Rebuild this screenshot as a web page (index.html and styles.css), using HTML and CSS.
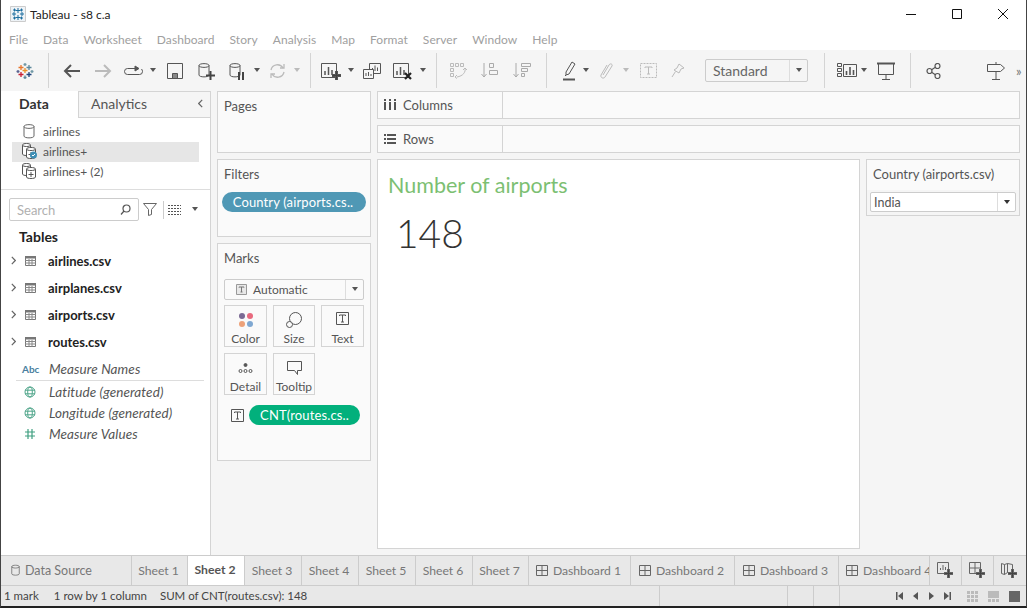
FILE: index.html
```html
<!DOCTYPE html>
<html lang="en">
<head>
    <meta charset="UTF-8">
    <meta name="viewport" content="width=device-width, initial-scale=1.0">
    <title>Tableau - s8 c.a</title>
    <link rel="stylesheet" href="styles.css">
</head>
<body>

    <!-- shared icons -->
    <svg class="defs">
        <symbol id="caret" viewBox="0 0 8 5"><path d="M1 0h6L4 4z" fill="currentColor"/></symbol>
        <symbol id="cyl" viewBox="0 0 12 16"><path d="M1 3.500C1 1 11 1 11 3.500V13C11 15.500 1 15.500 1 13ZM1 3.500C1 6 11 6 11 3.500" fill="none" stroke="currentColor"/></symbol>
        <symbol id="blend" viewBox="0 0 16 18"><g fill="#fff" stroke="#555"><path d="M1.500 3C1.500 1 9.500 1 9.500 3V12C9.500 14 1.500 14 1.500 12Z"/><path d="M1.500 3C1.500 5 9.500 5 9.500 3"/><path d="M5.500 7C5.500 5 14.500 5 14.500 7V15C14.500 17 5.500 17 5.500 15Z"/><path d="M5.500 7C5.500 9 14.500 9 14.500 7"/><path d="M10 10v5M7.500 12.500h5" fill="none"/></g></symbol>
        <symbol id="table" viewBox="0 0 11 10"><path d="M.5.500h10v9H.5z" fill="#fff" stroke="#777"/><path d="M0 0h11v2.500H0z" fill="#777"/><path d="M4 3v7M7 3v7M0 4.500h11M0 7h11" stroke="#888"/></symbol>
        <symbol id="globe" viewBox="0 0 12 12"><g fill="none" stroke="#4fa58a"><circle cx="6" cy="6" r="5"/><ellipse cx="6" cy="6" rx="2.300" ry="5"/><path d="M1 4.200h10M1 7.800h10"/></g></symbol>
        <symbol id="plus" viewBox="0 0 9 9"><path d="M3.500 0h2v3.500H9v2H5.500V9h-2V5.500H0v-2h3.500z" fill="#444"/></symbol>
        <symbol id="dash" viewBox="0 0 12 11"><path d="M.5.500h11v10H.5zM6 .500v10M.5 5.500h11" fill="none" stroke="#666"/></symbol>
        <symbol id="tbox" viewBox="0 0 13 13"><path d="M.5.500h12v12H.5z" fill="none" stroke="#555"/><path d="M3.500 4V3h6v1M6.500 3v7M5 10h3" fill="none" stroke="#555"/></symbol>
        <symbol id="chev" viewBox="0 0 5 9"><path d="M.8.800l3.500 3.700L.8 8.200" fill="none" stroke="#666" stroke-width="1.200"/></symbol>
    </svg>

    <div class="app">
        <div class="titlebar">
            <svg class="app-icon" viewBox="0 0 16 16"><path d="M.5.500h15v15H.5z" fill="#eef3f7" stroke="#ccc"/><path d="M8 2v5M5.500 4.500h5M8 9v5M5.500 11.500h5M4 6v4M2 8h4M12 6v4M10 8h4M4.500 2.500v3M3 4h3M11.500 2.500v3M10 4h3M4.500 10.500v3M3 12h3M11.500 10.500v3M10 12h3" stroke="#1f6f9f" fill="none"/></svg>
            <span class="title">Tableau - s8 c.a</span>
            <div class="win-btns">
                <svg viewBox="0 0 46 14"><path d="M18 7.500h10" stroke="#111" fill="none"/></svg>
                <svg viewBox="0 0 46 14"><path d="M18.500 2.500h9v9h-9z" stroke="#111" fill="none"/></svg>
                <svg viewBox="0 0 46 14"><path d="M18 2l10 10M28 2L18 12" stroke="#111" fill="none"/></svg>
            </div>
        </div>

        <div class="menubar">
            <span>File</span><span>Data</span><span>Worksheet</span><span>Dashboard</span><span>Story</span><span>Analysis</span><span>Map</span><span>Format</span><span>Server</span><span>Window</span><span>Help</span>
        </div>

        <div class="toolbar">
            <div class="tool logo">
                <svg width="18" height="18" viewBox="0 0 18 18" fill="none" stroke-width="1.300"><path d="M9 1v3M7.500 2.500h3" stroke="#7099a6"/><path d="M5 3v5M2.500 5.500h5" stroke="#e8762c"/><path d="M13 3v5M10.500 5.500h5" stroke="#5b879b"/><path d="M2 8v3M.5 9.500h3" stroke="#5b6591"/><path d="M16 8v3M14.500 9.500h3" stroke="#7099a6"/><path d="M9 6v5M6.500 8.500h5" stroke="#eb912b"/><path d="M5 10v5M2.500 12.500h5" stroke="#c72035"/><path d="M13 10v5M10.500 12.500h5" stroke="#1f447e"/><path d="M9 13.500v3.500M7.500 15.500h3" stroke="#59879b"/></svg>
            </div>
            <div class="sep sep-logo"></div>
            <div class="tool gap2"><svg width="17" height="14" viewBox="0 0 17 14" fill="none" stroke="#555" stroke-width="2"><path d="M17 7H2M8 1L2 7l6 6"/></svg></div>
            <div class="tool"><svg width="17" height="14" viewBox="0 0 17 14" fill="none" stroke="#bbb" stroke-width="2"><path d="M0 7h15M9 1l6 6-6 6"/></svg></div>
            <div class="tool"><svg width="19" height="12" viewBox="0 0 19 12" fill="none" stroke="#555"><path d="M11 3.500H3.500a3 3 0 0 0 0 6h12a3 3 0 0 0 3-3c0-1-.5-2-1-2.500"/><path d="M11 1v5l4-2.500z" fill="#555"/></svg></div>
            <svg class="caret gap2"><use href="#caret"/></svg>
            <div class="tool gap1"><svg width="16" height="16" viewBox="0 0 16 16" fill="none" stroke="#555"><path d="M.5.500h15v15H.5z"/><path d="M5.500 10.500h5v5h-5z" fill="#888"/></svg></div>
            <div class="tool gap1"><svg width="17" height="18" viewBox="0 0 17 18"><use href="#cyl" width="12" height="16" color="#555"/><use href="#plus" x="8" y="9" width="9" height="9"/></svg></div>
            <div class="tool"><svg width="17" height="18" viewBox="0 0 17 18"><use href="#cyl" width="12" height="16" color="#555"/><path d="M9 10h2v8H9zM13 10h2v8h-2z" fill="#444"/></svg></div>
            <svg class="caret"><use href="#caret"/></svg>
            <div class="tool"><svg width="17" height="16" viewBox="0 0 17 16" fill="none" stroke="#bbb" stroke-width="1.300"><path d="M2 7a6.500 6.500 0 0 1 12-2M15 9a6.500 6.500 0 0 1-12 2"/><path d="M11 5h4V1M6 11H2v4"/></svg></div>
            <svg class="caret off"><use href="#caret"/></svg>
            <div class="sep"></div>
            <div class="tool"><svg width="20" height="18" viewBox="0 0 20 18" fill="none" stroke="#555"><path d="M.5 1.500h15v14H.5z"/><path d="M4 13V9M7.500 13V5M11 13V8" stroke-width="1.500"/><use href="#plus" x="11" y="9" width="9" height="9"/></svg></div>
            <svg class="caret gap1"><use href="#caret"/></svg>
            <div class="tool gap1"><svg width="18" height="16" viewBox="0 0 18 16" fill="none" stroke="#555"><path d="M6.500.500h11v10h-11z"/><path d="M9.500 8V5M12 8V2.500M14.500 8V4.500"/><path d="M.5 6.500h10v9H.5z" fill="#f5f5f5"/><path d="M3 13v-3M5.500 13V9M8 13v-2"/></svg></div>
            <div class="tool"><svg width="20" height="18" viewBox="0 0 20 18" fill="none" stroke="#555"><path d="M.5 1.500h15v14H.5z"/><path d="M4 13V9M7.500 13V5M11 13V8" stroke-width="1.500"/><path d="M12 11l6 6M18 11l-6 6" stroke="#222" stroke-width="2.200"/></svg></div>
            <svg class="caret"><use href="#caret"/></svg>
            <div class="sep sep-sort"></div>
            <div class="tool gap2"><svg width="17" height="16" viewBox="0 0 17 16" fill="none" stroke="#bbb"><path d="M.5.500h3v3h-3zM5.500.500h3v3h-3zM10.500.500h3v3h-3zM.5 5.500h3v3h-3zM.5 10.500h3v3h-3z"/><path d="M15 5c1 4-2 8-8 9M13 7l2-2 2 2M7 12l-2 2 2 1.500"/></svg></div>
            <div class="tool gap2"><svg width="18" height="16" viewBox="0 0 18 16" fill="none" stroke="#aaa"><path d="M3 0v14M.5 11L3 14l2.500-3"/><path d="M8.500.500h4v4h-4zM8.500 7.500h8v4h-8z"/></svg></div>
            <div class="tool"><svg width="18" height="16" viewBox="0 0 18 16" fill="none" stroke="#aaa"><path d="M3 0v14M.5 11L3 14l2.500-3"/><path d="M8.500.500h9v3h-9zM8.500 5.500h6v3h-6zM8.500 10.500h3v3h-3z"/></svg></div>
            <div class="sep sep-mark"></div>
            <div class="tool narrow"><svg width="13" height="20" viewBox="0 0 13 20" fill="none" stroke="#555"><path d="M9 1l3 2-6 10-3 1 0-3zM2 15l1-1"/><path d="M0 18.500h12" stroke-width="2"/></svg></div>
            <svg class="caret"><use href="#caret"/></svg>
            <div class="tool"><svg width="13" height="18" viewBox="0 0 13 18" fill="none" stroke="#bbb"><path d="M3 13L9 3c1-2 4-1 3 1L5 15c-1 2-5 1-4-2l6-10"/></svg></div>
            <svg class="caret off gap2"><use href="#caret"/></svg>
            <div class="tool"><svg width="17" height="15" viewBox="0 0 17 15" fill="none" stroke="#bbb"><path d="M.5.500h16v14H.5z" stroke-dasharray="2 1"/><path d="M5 5V4h7v1M8.500 4v7M7 11h3"/></svg></div>
            <div class="tool"><svg width="14" height="16" viewBox="0 0 14 16" fill="none" stroke="#bbb"><path d="M8 1l5 4-3 1-2 4-5-3 3-2zM4.500 8.500L1 14"/></svg></div>
            <div class="fit-select">
                <span class="fit-label">Standard</span>
                <span class="fit-arrow"><svg width="8" height="5"><use href="#caret"/></svg></span>
            </div>
            <div class="sep sep-fit"></div>
            <div class="tool narrow"><svg width="20" height="15" viewBox="0 0 20 15" fill="none" stroke="#555"><path d="M.5.500h4v3h-4zM.5 5.500h4v3h-4zM.5 10.500h4v3h-4zM6.500 1.500h13v12h-13z"/><path d="M9.500 12V8M13 12V4M16.500 12V7" stroke-width="1.600"/></svg></div>
            <svg class="caret gap2"><use href="#caret"/></svg>
            <div class="tool"><svg width="18" height="18" viewBox="0 0 18 18" fill="none" stroke="#555"><path d="M0 1.500h18" stroke-width="2"/><path d="M1.500 2v10.500h15V2M9 12.500V17M5 17.500h8"/></svg></div>
            <div class="sep sep-share"></div>
            <div class="tool"><svg width="15" height="16" viewBox="0 0 15 16" fill="none" stroke="#555" stroke-width="1.200"><circle cx="3.500" cy="8" r="2.500"/><circle cx="11.500" cy="3" r="2.500"/><circle cx="11.500" cy="13" r="2.500"/><path d="M5.600 6.700l3.800-2.400M5.600 9.300l3.800 2.400"/></svg></div>
            <div class="tool guide"><svg width="18" height="18" viewBox="0 0 18 18" fill="none" stroke="#555"><path d="M.5 2.500h13l4 3.500-4 3.500H.5zM9 0v2.500M9 9.500V17M5 17.500h8"/></svg></div>
            <span class="more">»</span>
        </div>

        <div class="main">
            <div class="data-pane">
                <div class="pane-tabs">
                    <div class="pane-tab active">Data</div>
                    <div class="pane-tab">Analytics<svg class="collapse" width="5" height="9"><use href="#chev" transform="matrix(-1 0 0 1 5 0)"/></svg></div>
                </div>
                <div class="sources">
                    <div class="source"><svg width="12" height="16"><use href="#cyl" color="#666"/></svg><span>airlines</span></div>
                    <div class="source selected"><svg class="blend-icon" width="18" height="18" viewBox="0 0 18 18"><use href="#blend" width="16" height="18"/><circle cx="12.500" cy="13" r="3.500" fill="#3f8fb5"/><path d="M11 13l1 1 2-2" stroke="#fff" fill="none"/></svg><span>airlines+</span></div>
                    <div class="source"><svg class="blend-icon" width="18" height="18" viewBox="0 0 18 18"><use href="#blend" width="16" height="18"/></svg><span>airlines+ (2)</span></div>
                </div>
                <div class="search-row">
                    <div class="search">
                        <span>Search</span>
                        <svg width="11" height="11" viewBox="0 0 11 11" fill="none" stroke="#555" stroke-width="1.200"><circle cx="6.500" cy="4.500" r="3.500"/><path d="M4 7l-3 3.500"/></svg>
                    </div>
                    <svg width="14" height="13" viewBox="0 0 14 13" fill="none" stroke="#666"><path d="M.5.500h13L8.500 6.500v5l-3 1v-6z"/></svg>
                    <div class="mini-sep"></div>
                    <svg width="13" height="10" viewBox="0 0 13 10" stroke="#555" fill="none" stroke-dasharray="2 1"><path d="M0 .5h13M0 3.500h13M0 6.500h13M0 9.500h13"/></svg>
                    <svg class="caret-sm" width="8" height="5"><use href="#caret"/></svg>
                </div>
                <div class="tables-head">Tables</div>
                <div class="table-row"><svg width="5" height="9"><use href="#chev"/></svg><svg width="11" height="10"><use href="#table"/></svg><span>airlines.csv</span></div>
                <div class="table-row"><svg width="5" height="9"><use href="#chev"/></svg><svg width="11" height="10"><use href="#table"/></svg><span>airplanes.csv</span></div>
                <div class="table-row"><svg width="5" height="9"><use href="#chev"/></svg><svg width="11" height="10"><use href="#table"/></svg><span>airports.csv</span></div>
                <div class="table-row"><svg width="5" height="9"><use href="#chev"/></svg><svg width="11" height="10"><use href="#table"/></svg><span>routes.csv</span></div>
                <div class="field names"><span class="abc">Abc</span><span class="fname">Measure Names</span></div>
                <div class="field"><svg width="12" height="12"><use href="#globe"/></svg><span class="fname">Latitude (generated)</span></div>
                <div class="field"><svg width="12" height="12"><use href="#globe"/></svg><span class="fname">Longitude (generated)</span></div>
                <div class="field"><svg width="12" height="12" viewBox="0 0 12 12" fill="none" stroke="#3f9f80" stroke-width="1.200"><path d="M4 1v10M8 1v10M1 4h10M1 8h10"/></svg><span class="fname">Measure Values</span></div>
            </div>

            <div class="cards-col">
                <div class="card pages">Pages</div>
                <div class="card filters">
                    <div>Filters</div>
                    <div class="pill blue">Country (airports.cs..</div>
                </div>
                <div class="card marks">
                    <div>Marks</div>
                    <div class="mark-select">
                        <span class="mark-type"><svg width="11" height="11" viewBox="0 0 11 11" fill="#e8e8e8" stroke="#999"><path d="M.5.500h10v10H.5z"/><path d="M3 3.500V3h5v.5M5.500 3v5M4.500 8h2" fill="none" stroke="#777"/></svg>Automatic</span>
                        <span class="mark-arrow"><svg width="8" height="5"><use href="#caret"/></svg></span>
                    </div>
                    <div class="mark-grid">
                        <div class="mark-btn"><svg width="16" height="16" viewBox="0 0 16 16"><circle cx="4" cy="4" r="3" fill="#7b6a94"/><circle cx="12" cy="4" r="3" fill="#e86a7e"/><circle cx="4" cy="12" r="3" fill="#eda27a"/><circle cx="12" cy="12" r="3" fill="#7fa8d2"/></svg>Color</div>
                        <div class="mark-btn"><svg width="16" height="16" viewBox="0 0 16 16" fill="none" stroke="#555"><circle cx="9.500" cy="6.500" r="6"/><circle cx="3.500" cy="12.500" r="3" fill="#fafafa"/></svg>Size</div>
                        <div class="mark-btn"><svg width="13" height="13"><use href="#tbox"/></svg>Text</div>
                        <div class="mark-btn"><svg width="15" height="16" viewBox="0 0 15 16" fill="none" stroke="#555"><circle cx="7.500" cy="5" r="1.500" fill="#555"/><circle cx="2.500" cy="11" r="1.500"/><circle cx="7.500" cy="11" r="1.500"/><circle cx="12.500" cy="11" r="1.500"/></svg>Detail</div>
                        <div class="mark-btn"><svg width="15" height="16" viewBox="0 0 15 16" fill="none" stroke="#555"><path d="M.5 1.500h14v9h-4v4l-3-4h-7z"/></svg>Tooltip</div>
                    </div>
                    <div class="mark-pill">
                        <svg width="13" height="13"><use href="#tbox"/></svg>
                        <div class="pill green">CNT(routes.cs..</div>
                    </div>
                </div>
            </div>

            <div class="work">
                <div class="shelf"><div class="shelf-label"><svg width="12" height="11" viewBox="0 0 12 11" fill="#555"><path d="M0 0h2v2H0zM5 0h2v2H5zM10 0h2v2h-2zM0 3h2v8H0zM5 3h2v8H5zM10 3h2v8h-2z"/></svg>Columns</div></div>
                <div class="shelf"><div class="shelf-label"><svg width="12" height="10" viewBox="0 0 12 10" fill="#555"><path d="M0 0h2v2H0zM3 0h9v2H3zM0 4h2v2H0zM3 4h9v2H3zM0 8h2v2H0zM3 8h9v2H3z"/></svg>Rows</div></div>
                <div class="view-row">
                    <div class="view">
                        <div class="view-title">Number of airports</div>
                        <div class="view-num">148</div>
                    </div>
                    <div class="legend">
                        <div class="legend-title">Country (airports.csv)</div>
                        <div class="legend-select">
                            <span class="legend-val">India</span>
                            <span class="legend-arrow"><svg width="8" height="5"><use href="#caret"/></svg></span>
                        </div>
                    </div>
                </div>
            </div>
        </div>

        <div class="tabs">
            <div class="tab source-tab"><svg width="9" height="12"><use href="#cyl" width="9" height="12" color="#666"/></svg>Data Source</div>
            <div class="tab sheet">Sheet 1</div>
            <div class="tab sheet current">Sheet 2</div>
            <div class="tab sheet">Sheet 3</div>
            <div class="tab sheet">Sheet 4</div>
            <div class="tab sheet">Sheet 5</div>
            <div class="tab sheet">Sheet 6</div>
            <div class="tab sheet">Sheet 7</div>
            <div class="tab dash"><svg width="12" height="11"><use href="#dash"/></svg>Dashboard 1</div>
            <div class="tab dash"><svg width="12" height="11"><use href="#dash"/></svg>Dashboard 2</div>
            <div class="tab dash"><svg width="12" height="11"><use href="#dash"/></svg>Dashboard 3</div>
            <div class="tab dash clipped"><svg width="12" height="11"><use href="#dash"/></svg>Dashboard 4</div>
            <div class="tab new-tab"><svg width="16" height="16" viewBox="0 0 16 16" fill="none" stroke="#666"><path d="M.5.500h11v11H.5z"/><path d="M3.500 8V6M6 8V3M8.500 8V5"/><use href="#plus" x="7" y="7" width="9" height="9"/></svg></div>
            <div class="tab new-tab"><svg width="16" height="16" viewBox="0 0 16 16" fill="none" stroke="#666"><path d="M.5.500h11v11H.5zM6 .500v11M.5 6h11"/><use href="#plus" x="7" y="7" width="9" height="9"/></svg></div>
            <div class="tab new-tab"><svg width="16" height="16" viewBox="0 0 16 16" fill="none" stroke="#666"><path d="M.5 1.500l3 1 3-1 5 1v9l-5-1-3 2-3-1zM3.500 2.500v10M6.500 1.500v9"/><use href="#plus" x="7" y="7" width="9" height="9"/></svg></div>
        </div>

        <div class="statusbar">
            <div class="status-text">
                <span class="s1">1 mark</span>
                <span class="s2">1 row by 1 column</span>
                <span>SUM of CNT(routes.csv): 148</span>
            </div>
            <div class="status-cell c1"></div>
            <div class="status-cell c2"></div>
            <div class="status-cell c2"></div>
            <div class="status-cell last">
                <div class="pager">
                    <svg width="7" height="8" viewBox="0 0 7 8" fill="#555"><path d="M0 0h1.500v8H0zM7 0v8L2 4z"/></svg>
                    <svg width="5" height="8" viewBox="0 0 5 8" fill="#555"><path d="M5 0v8L0 4z"/></svg>
                    <svg width="5" height="8" viewBox="0 0 5 8" fill="#555"><path d="M0 0v8l5-4z"/></svg>
                    <svg width="7" height="8" viewBox="0 0 7 8" fill="#555"><path d="M0 0v8l5-4zM5.500 0H7v8H5.500z"/></svg>
                </div>
                <div class="view-modes">
                    <svg width="11" height="11" viewBox="0 0 11 11" fill="#bbb"><path d="M0 0h3v3H0zM4 0h3v3H4zM8 0h3v3H8zM0 4h3v3H0zM4 4h3v3H4zM8 4h3v3H8zM0 8h3v3H0zM4 8h3v3H4zM8 8h3v3H8z"/></svg>
                    <svg width="11" height="11" viewBox="0 0 11 11" fill="#bbb"><path d="M0 0h11v7H0zM0 8h3v3H0zM4 8h3v3H4zM8 8h3v3H8z"/></svg>
                    <svg width="11" height="11" viewBox="0 0 11 11" fill="#666"><path d="M0 0h11v11H0z"/></svg>
                </div>
            </div>
        </div>
    </div>

</body>
</html>
```

FILE: styles.css
```css
* {
    box-sizing: border-box;
}

body {
    margin: 0;
    font-family: "Lato", "Open Sans", sans-serif;
    font-size: 13px;
    color: #555;
    overflow: hidden;
}

.defs {
    display: none;
}

.app {
    width: 1027px;
    height: 608px;
    display: flex;
    flex-direction: column;
    background: #fff;
    border-left: 1px solid #444;
    border-right: 1px solid #444;
    border-bottom: 2px solid #222;
}

/* title + menu */
.titlebar {
    height: 28px;
    display: flex;
    align-items: center;
    padding-left: 9px;
    flex: none;
}

.app-icon {
    width: 16px;
    height: 16px;
    margin-right: 4px;
}

.title {
    color: #222;
    font-size: 12px;
}

.win-btns {
    margin-left: auto;
    display: flex;
}

.win-btns svg {
    width: 46px;
    height: 14px;
}

.menubar {
    height: 22px;
    flex: none;
    display: flex;
    align-items: center;
    gap: 15px;
    padding: 1px 0 0 8px;
    color: #a0a0a0;
    font-size: 12px;
    letter-spacing: .06px;
}

.toolbar {
    height: 41px;
    flex: none;
    background: #f5f5f5;
    display: flex;
    align-items: center;
}

.tool {
    width: 30px;
    height: 30px;
    flex: none;
    display: flex;
    align-items: center;
    justify-content: center;
}

.tool.logo {
    width: 47px;
}

.tool.narrow {
    width: 24px;
}

.tool.guide {
    margin-left: 33px;
}

.gap1 {
    margin-right: 1px;
}

.gap2 {
    margin-right: 2px;
}

.caret {
    width: 10px;
    height: 5px;
    flex: none;
    color: #555;
}

.caret.off {
    color: #bbb;
}

.sep {
    width: 1px;
    height: 35px;
    background: #d4d4d4;
    flex: none;
    margin: 0 5px 0 8px;
}

.sep-logo {
    margin: 0 7px 0 0;
}

.sep-sort {
    margin: 0 6px 0 8px;
}

.sep-mark {
    margin: 0 10px 0 9px;
}

.sep-fit {
    margin: 0 10px 0 16px;
}

.sep-share {
    margin: 0 7px 0 9px;
}

.fit-select {
    width: 103px;
    height: 23px;
    margin: 0 0 1px 12px;
    flex: none;
    border: 1px solid #ccc;
    border-radius: 2px;
    display: flex;
    align-items: center;
    font-size: 14px;
    color: #666;
}

.fit-label {
    flex: 1;
    padding-left: 7px;
}

.fit-arrow {
    width: 18px;
    height: 100%;
    border-left: 1px solid #ddd;
    display: flex;
    align-items: center;
    justify-content: center;
    color: #555;
}

.more {
    margin-left: 5px;
    color: #777;
    font-size: 13px;
}

/* main area */
.main {
    height: 464px;
    flex: none;
    display: flex;
    background: #f5f5f5;
}

.data-pane {
    width: 210px;
    flex: none;
    background: #fff;
    border-right: 1px solid #d4d4d4;
}

.pane-tabs {
    display: flex;
    height: 27px;
    font-size: 14px;
}

.pane-tab {
    line-height: 26px;
}

.pane-tab.active {
    width: 77px;
    padding-left: 18px;
    font-weight: 700;
    color: #333;
}

.pane-tab:not(.active) {
    flex: 1;
    padding-left: 12px;
    background: #f5f5f5;
    border-left: 1px solid #d4d4d4;
    border-top: 1px solid #d4d4d4;
    border-bottom: 1px solid #d4d4d4;
    position: relative;
    line-height: 24px;
}

.collapse {
    position: absolute;
    right: 7px;
    top: 7px;
}

.sources {
    padding: 4px 11px 0;
    height: 72px;
    border-bottom: 1px solid #ddd;
    font-size: 12px;
}

.source {
    height: 20px;
    display: flex;
    align-items: center;
    padding: 0 0 2px 11px;
}

.source svg {
    width: 12px;
    margin-right: 8px;
    flex: none;
}

.source .blend-icon {
    width: 18px;
    margin-left: -2px;
    margin-right: 4px;
}

.source.selected {
    background: #e6e6e6;
}

.search-row {
    display: flex;
    align-items: center;
    padding: 8px 0 0 8px;
}

.search {
    width: 130px;
    height: 23px;
    border: 1px solid #ccc;
    border-radius: 2px;
    display: flex;
    align-items: center;
    justify-content: space-between;
    padding: 0 7px;
    color: #b0b0b0;
    font-size: 13px;
    margin-right: 4px;
}

.mini-sep {
    width: 1px;
    height: 18px;
    background: #ccc;
    margin: 0 4px 0 6px;
}

.caret-sm {
    margin-left: 10px;
    color: #555;
}

.tables-head {
    font-weight: 700;
    color: #222;
    font-size: 14px;
    padding: 7px 0 0 18px;
    height: 26px;
}

.table-row {
    height: 27px;
    display: flex;
    align-items: center;
    padding-left: 10px;
    font-weight: 700;
    color: #222;
    font-size: 13px;
}

.table-row svg:first-child {
    margin-right: 9px;
}

.table-row svg + svg {
    margin-right: 12px;
}

.field {
    height: 21px;
    display: flex;
    align-items: center;
    padding-left: 23px;
}

.field svg {
    margin-right: 13px;
}

.field.names {
    margin: 2px 6px 0 15px;
    padding-left: 6px;
    height: 24px;
    border-bottom: 1px solid #ddd;
}

.abc {
    width: 27px;
    font-size: 10px;
    font-weight: 700;
    color: #4a7f9f;
}

.fname {
    font-style: italic;
    font-size: 13.500px;
    letter-spacing: .1px;
    color: #555;
}

.cards-col {
    width: 154px;
    margin: 0 6px;
    flex: none;
    display: flex;
    flex-direction: column;
    gap: 6px;
}

.card {
    background: #fafafa;
    border: 1px solid #d4d4d4;
    padding: 6px;
}

.pages {
    height: 62px;
}

.filters {
    height: 78px;
    padding-bottom: 0;
}

.marks {
    height: 218px;
}

.pill {
    color: #fff;
    height: 20px;
    line-height: 20px;
    border-radius: 10px;
    font-size: 13px;
    letter-spacing: .13px;
    text-align: center;
}

.pill.blue {
    background: #4f98b5;
    width: 144px;
    margin: 10px 0 0 -2px;
    padding-right: 2px;
}

.pill.green {
    background: #02b07c;
    width: 111px;
}

.mark-select {
    height: 21px;
    margin-top: 13px;
    background: #fafafa;
    border: 1px solid #ccc;
    border-radius: 2px;
    display: flex;
    align-items: center;
    font-size: 12px;
}

.mark-type {
    flex: 1;
    display: flex;
    align-items: center;
    gap: 6px;
    padding-left: 11px;
}

.mark-arrow {
    width: 18px;
    height: 100%;
    border-left: 1px solid #ddd;
    display: flex;
    align-items: center;
    justify-content: center;
    color: #555;
}

.mark-grid {
    display: grid;
    grid-template-columns: 43px 42px 43px;
    column-gap: 6px;
    row-gap: 6px;
    margin-top: 5px;
}

.mark-btn {
    height: 42px;
    border: 1px solid #d4d4d4;
    display: flex;
    flex-direction: column;
    align-items: center;
    justify-content: space-between;
    padding: 6px 0 0;
    font-size: 12px;
}

.mark-pill {
    display: flex;
    align-items: center;
    gap: 5px;
    margin-top: 10px;
    padding-left: 7px;
}

.work {
    width: 643px;
    flex: none;
    display: flex;
    flex-direction: column;
}

.shelf {
    height: 28px;
    margin-bottom: 6px;
    flex: none;
    background: #fafafa;
    border: 1px solid #d4d4d4;
}

.shelf-label {
    width: 125px;
    height: 100%;
    border-right: 1px solid #d4d4d4;
    display: flex;
    align-items: center;
    gap: 7px;
    padding: 0 0 1px 6px;
}

.view-row {
    display: flex;
    gap: 6px;
    height: 390px;
    align-items: flex-start;
}

.view {
    width: 483px;
    height: 390px;
    background: #fff;
    border: 1px solid #d4d4d4;
    padding: 12px 10px;
}

.view-title {
    color: #7cbf72;
    font-size: 21.500px;
}

.view-num {
    color: #333;
    font-size: 39px;
    font-weight: 300;
    margin: 12px 0 0 8px;
}

.legend {
    width: 154px;
    height: 57px;
    border: 1px solid #d4d4d4;
}

.legend-title {
    background: #fafafa;
    height: 30px;
    line-height: 28px;
    padding-left: 6px;
}

.legend-select {
    height: 20px;
    margin: 2px 3px;
    background: #fff;
    border: 1px solid #ccc;
    border-radius: 2px;
    display: flex;
    align-items: center;
    font-size: 12.500px;
}

.legend-val {
    flex: 1;
    padding-left: 3px;
}

.legend-arrow {
    width: 18px;
    height: 100%;
    border-left: 1px solid #ddd;
    display: flex;
    align-items: center;
    justify-content: center;
    color: #333;
}

/* bottom tabs */
.tabs {
    height: 31px;
    flex: none;
    display: flex;
    background: #e8e8e8;
    border-top: 1px solid #ccc;
    border-bottom: 1px solid #ccc;
    color: #777;
    font-size: 12.200px;
}

.tab {
    flex: none;
    display: flex;
    align-items: center;
    justify-content: center;
    border-right: 1px solid #ccc;
    gap: 5px;
    overflow: hidden;
    white-space: nowrap;
    padding: 0 2px 1px 0;
}

.tab svg {
    flex: none;
}

.source-tab {
    width: 131px;
    justify-content: flex-start;
    padding-left: 10px;
    font-size: 12.500px;
}

.sheet {
    width: 57px;
}

.source-tab + .sheet {
    width: 56px;
}

.sheet:nth-child(8) {
    width: 56px;
}

.sheet.current {
    background: #fff;
    font-weight: 700;
    color: #555;
    padding-bottom: 3px;
}

.dash {
    width: 102px;
}

.dash:nth-child(n+10) {
    width: 104px;
}

.dash.clipped {
    width: 91px;
    justify-content: flex-start;
    padding-left: 7px;
}

.new-tab {
    width: 32px;
}

.new-tab:last-child {
    border-right: 0;
}

.statusbar {
    height: 20px;
    flex: none;
    display: flex;
    background: #e8e8e8;
    color: #444;
    font-size: 11.500px;
}

.status-text {
    width: 658px;
    padding-left: 3px;
    line-height: 20px;
    white-space: nowrap;
}

.s1 {
    margin-right: 12px;
}

.s2 {
    margin-right: 10px;
}

.status-cell {
    border-left: 1px solid #ccc;
    flex: none;
}

.status-cell.c1 {
    width: 128px;
}

.status-cell.c2 {
    width: 26px;
}

.status-cell.last {
    flex: 1;
    display: flex;
    align-items: center;
    justify-content: flex-end;
}

.pager {
    display: flex;
    align-items: center;
    gap: 10.500px;
    margin-right: 16px;
}

.view-modes {
    display: flex;
    gap: 10px;
    margin-right: 6px;
}
```
